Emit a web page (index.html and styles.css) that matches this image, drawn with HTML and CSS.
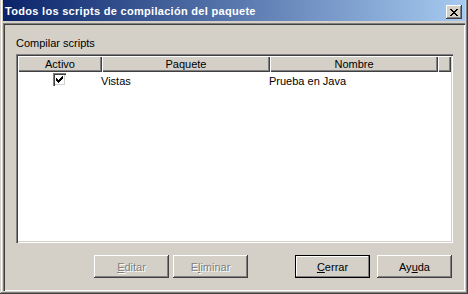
FILE: index.html
```html
<!DOCTYPE html>
<html lang="es">
<head>
    <meta charset="UTF-8">
    <title>Todos los scripts de compilación del paquete</title>
    <link rel="stylesheet" href="styles.css">
</head>
<body>
    <div class="window">
        <div class="titlebar">
            <span class="title">Todos los scripts de compilación del paquete</span>
            <button class="close" title="Cerrar">
                <svg width="8" height="7" viewBox="0 0 8 7" shape-rendering="crispEdges">
                    <path fill="#000" d="M0 0h2v1H0z M6 0h2v1H6z M1 1h2v1H1z M5 1h2v1H5z M2 2h4v1H2z M3 3h2v1H3z M2 4h4v1H2z M1 5h2v1H1z M5 5h2v1H5z M0 6h2v1H0z M6 6h2v1H6z"/>
                </svg>
            </button>
        </div>

        <div class="client">
            <div class="group-label">Compilar scripts</div>

            <div class="list">
                <div class="list-head">
                    <div class="head-cell">Activo</div>
                    <div class="head-cell">Paquete</div>
                    <div class="head-cell">Nombre</div>
                    <div class="head-cell"></div>
                </div>
                <div class="list-row">
                    <div class="cell cell-check">
                        <span class="checkbox">
                            <svg width="7" height="7" viewBox="0 0 7 7" shape-rendering="crispEdges">
                                <path fill="#000" d="M0 2h1v3H0z M1 3h1v3H1z M2 4h1v3H2z M3 3h1v3H3z M4 2h1v3H4z M5 1h1v3H5z M6 0h1v3H6z"/>
                            </svg>
                        </span>
                    </div>
                    <div class="cell">Vistas</div>
                    <div class="cell">Prueba en Java</div>
                </div>
            </div>

            <div class="buttons">
                <button class="btn disabled"><u>E</u>ditar</button>
                <button class="btn disabled btn-spaced">E<u>l</u>iminar</button>
                <button class="btn default"><u>C</u>errar</button>
                <button class="btn">Ay<u>u</u>da</button>
            </div>
        </div>
    </div>
</body>
</html>
```

FILE: styles.css
```css
body {
    margin: 0;
    background: #d4d0c8;
    font-family: "Liberation Sans", Arial, sans-serif;
    font-size: 11px;
    color: #000;
}

/* window frame: top edge is cut off in the capture */
.window {
    width: 468px;
    height: 294px;
    box-sizing: border-box;
    padding: 0 3px 3px;
    display: flex;
    flex-direction: column;
    background: #d4d0c8;
    box-shadow: inset -1px -1px #404040, inset 1px 0 #d4d0c8,
                inset -2px -2px #808080, inset 2px 0 #fff;
}

.titlebar {
    height: 21px;
    margin-bottom: 2px;
    display: flex;
    align-items: flex-start;
    background: linear-gradient(to right, #0a246a, #a6caf0);
}
.title {
    flex: 1;
    padding: 1px 0 0 2px;
    line-height: 20px;
    color: #fff;
    font-weight: bold;
    letter-spacing: 0.3px;
    white-space: nowrap;
}
.close {
    width: 16px;
    height: 14px;
    margin: 5px 3px 0 0;
    padding: 0;
    border: 0;
    display: flex;
    align-items: center;
    justify-content: center;
    background: #d4d0c8;
    box-shadow: inset -1px -1px #404040, inset 1px 1px #fff,
                inset -2px -2px #808080;
}

/* sunken client area */
.client {
    flex: 1;
    padding: 14px 12px 13px 13px;
    display: flex;
    flex-direction: column;
    box-shadow: inset 1px 1px #808080, inset 2px 2px #404040,
                inset -1px -1px #fff, inset -2px -2px #d4d0c8;
}
.group-label {
    line-height: 13px;
    margin-bottom: 4px;
}

.list {
    height: 189px;
    box-sizing: border-box;
    padding: 2px;
    background: #fff;
    box-shadow: inset 1px 1px #808080, inset 2px 2px #404040,
                inset -1px -1px #fff, inset -2px -2px #d4d0c8;
}
.list-head {
    display: grid;
    grid-template-columns: 84px 168px 168px 1fr;
    height: 16px;
    background: #d4d0c8;
}
.head-cell {
    line-height: 16px;
    text-align: center;
    box-shadow: inset 1px 1px #fff, inset -1px -1px #404040,
                inset -2px -2px #808080;
}
.list-row {
    display: grid;
    grid-template-columns: 83px 168px 1fr;
    height: 17px;
}
.cell {
    padding-top: 1px;
    line-height: 17px;
    white-space: nowrap;
}
.cell-check {
    padding-top: 1px;
    display: flex;
    justify-content: center;
    align-items: flex-start;
}
.checkbox {
    width: 13px;
    height: 13px;
    box-sizing: border-box;
    padding: 3px;
    display: flex;
    background: #fff;
    box-shadow: inset 1px 1px #808080, inset 2px 2px #404040,
                inset -1px -1px #fff, inset -2px -2px #d4d0c8;
}

.buttons {
    margin-top: 12px;
    padding-left: 78px;
    display: flex;
    gap: 4px;
}
.btn {
    width: 75px;
    height: 23px;
    padding: 0;
    border: 0;
    font: inherit;
    color: #000;
    background: #d4d0c8;
    box-shadow: inset -1px -1px #404040, inset 1px 1px #fff,
                inset -2px -2px #808080;
}
.btn u {
    text-underline-offset: 1px;
}
.btn-spaced {
    margin-right: 43px;
}
.default {
    margin-right: 3px;
    border: 1px solid #000;
    box-shadow: inset -1px -1px #808080, inset 1px 1px #fff;
}
.disabled {
    color: #808080;
    text-shadow: 1px 1px 0 #fff;
}
```
